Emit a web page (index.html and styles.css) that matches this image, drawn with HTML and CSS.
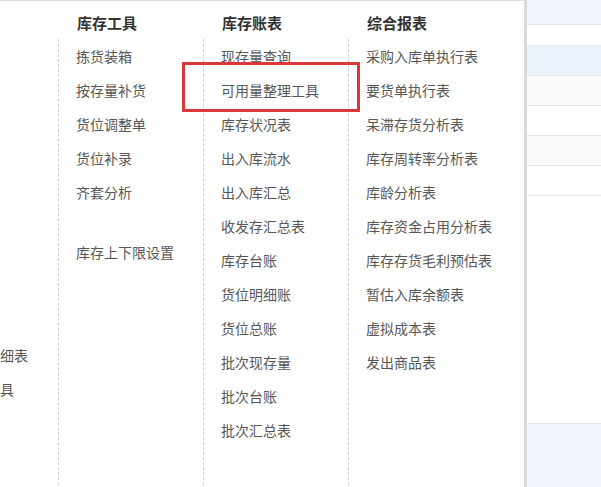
FILE: index.html
```html
<!DOCTYPE html>
<html lang="zh-CN">
<head>
<meta charset="utf-8">
<title>库存菜单</title>
<link rel="stylesheet" href="styles.css">
</head>
<body>
<div class="screen">
  <div class="panel">
    <div class="col col-0">
      <div class="list">
        <div class="group group-offset">
          <div class="item">细表</div>
          <div class="item">具</div>
        </div>
      </div>
    </div>
    <div class="col">
      <div class="head">库存工具</div>
      <div class="list dashed">
        <div class="group">
          <div class="item">拣货装箱</div>
          <div class="item">按存量补货</div>
          <div class="item">货位调整单</div>
          <div class="item">货位补录</div>
          <div class="item">齐套分析</div>
        </div>
        <div class="group group-gap">
          <div class="item">库存上下限设置</div>
        </div>
      </div>
    </div>
    <div class="col">
      <div class="head">库存账表</div>
      <div class="list dashed">
        <div class="group">
          <div class="item">现存量查询</div>
          <div class="item">可用量整理工具</div>
          <div class="item">库存状况表</div>
          <div class="item">出入库流水</div>
          <div class="item">出入库汇总</div>
          <div class="item">收发存汇总表</div>
          <div class="item">库存台账</div>
          <div class="item">货位明细账</div>
          <div class="item">货位总账</div>
          <div class="item">批次现存量</div>
          <div class="item">批次台账</div>
          <div class="item">批次汇总表</div>
        </div>
      </div>
    </div>
    <div class="col">
      <div class="head">综合报表</div>
      <div class="list dashed">
        <div class="group">
          <div class="item">采购入库单执行表</div>
          <div class="item">要货单执行表</div>
          <div class="item">呆滞存货分析表</div>
          <div class="item">库存周转率分析表</div>
          <div class="item">库龄分析表</div>
          <div class="item">库存资金占用分析表</div>
          <div class="item">库存存货毛利预估表</div>
          <div class="item">暂估入库余额表</div>
          <div class="item">虚拟成本表</div>
          <div class="item">发出商品表</div>
        </div>
      </div>
    </div>
    <div class="highlight"></div>
  </div>
  <div class="edge"></div>
  <div class="table">
    <div class="row r-blue r-h25"></div>
    <div class="row r-white r-h21"></div>
    <div class="row r-blue2"></div>
    <div class="row r-gray"></div>
    <div class="row r-white"></div>
    <div class="row r-gray"></div>
    <div class="row r-white"></div>
    <div class="table-fill"></div>
    <div class="table-foot"></div>
  </div>
</div>
</body>
</html>
```

FILE: styles.css
```css
html, body {
  margin: 0;
  padding: 0;
  background: #ffffff;
}

.screen {
  width: 601px;
  height: 487px;
  overflow: hidden;
  display: flex;
  font-family: "Noto Sans CJK SC", "Noto Sans", sans-serif;
}

.panel {
  position: relative;
  width: 524px;
  flex: 0 0 524px;
  height: 487px;
  box-sizing: border-box;
  border-top: 1px solid #dcdcdc;
  padding-top: 7px;
  display: flex;
  align-items: flex-start;
  background: #ffffff;
}

.col {
  width: 145px;
  flex: 0 0 145px;
  display: flex;
  flex-direction: column;
}

.col-0 {
  width: 58px;
  flex: 0 0 58px;
}

.col-0 .list {
  margin-top: 31px;
}

.head {
  height: 30px;
  line-height: 30px;
  padding-left: 19px;
  font-size: 15px;
  font-weight: bold;
  color: #333333;
  white-space: nowrap;
}

.list {
  margin-top: 1px;
  padding-top: 1px;
  height: 460px;
}

.dashed {
  border-left: 1px dashed #cfcfcf;
  padding-left: 17px;
}

.group {
  margin-top: -1px;
}

.item {
  height: 34px;
  line-height: 34px;
  font-size: 14px;
  color: #575757;
  white-space: nowrap;
}

.group-gap {
  margin-top: 26px;
}

.group-offset {
  margin-top: 298px;
}

.highlight {
  position: absolute;
  left: 182px;
  top: 61px;
  width: 178px;
  height: 50px;
  box-sizing: border-box;
  border: 3px solid #d8383c;
  pointer-events: none;
}

.edge {
  width: 3px;
  flex: 0 0 3px;
  background: #d9d9d9;
}

.table {
  flex: 1;
  display: flex;
  flex-direction: column;
  height: 487px;
}

.row {
  height: 29px;
  border-bottom: 1px solid #e4e6ea;
}

.r-h25 {
  height: 24px;
}

.r-h21 {
  height: 20px;
}

.r-blue {
  background: #f0f4fb;
}

.r-blue2 {
  background: #ebf2fc;
}

.r-white {
  background: #ffffff;
}

.r-gray {
  background: #fafafa;
}

.table-fill {
  height: 227px;
  background: #ffffff;
  border-bottom: 1px solid #e0e3e8;
}

.table-foot {
  flex: 1;
  background: #f2f6fc;
}
```
